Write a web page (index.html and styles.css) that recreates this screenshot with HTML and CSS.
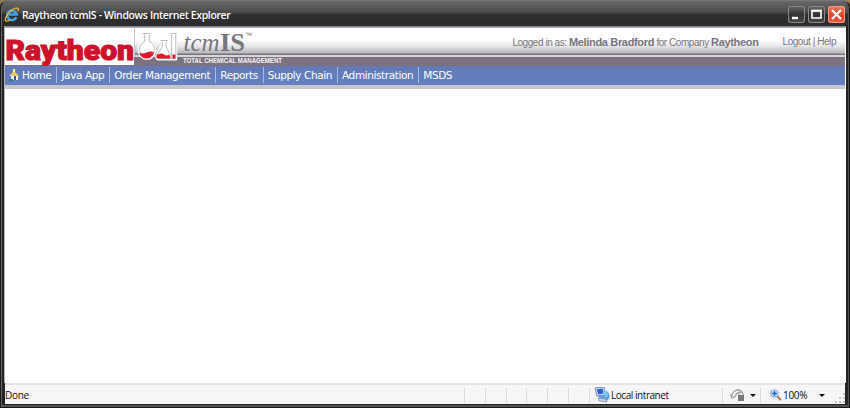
FILE: index.html
```html
<!DOCTYPE html>
<html lang="en">
<head>
<meta charset="utf-8">
<title>Raytheon tcmIS</title>
<link rel="stylesheet" href="styles.css">
</head>
<body>
<div class="window">
  <header class="titlebar">
    <svg class="ie" width="16" height="16" viewBox="0 0 16 16" fill="none">
      <path d="M12.3 10.2A4.7 4.7 0 1 1 12.6 7.5H5" stroke="#3aa4ee" stroke-width="2.6"/>
      <path d="M2 14C-.5 12 5 3 12 1.2c3-.5 2.6 1.5 1.6 3M2 14c1.5.7 3-.3 4-1" stroke="#f0b437" stroke-width="1.3"/>
    </svg>
    <span class="caption">Raytheon tcmIS - Windows Internet Explorer</span>
    <div class="controls">
      <span class="ctl"><svg width="17" height="17"><path d="M4 12h6" stroke="#fff" stroke-width="2.4"/></svg></span>
      <span class="ctl"><svg width="17" height="17"><path d="M4 5h9v7H4z" fill="none" stroke="#fff" stroke-width="1.6"/><path d="M3.2 4.6h10.6" stroke="#fff" stroke-width="2"/></svg></span>
      <span class="ctl close"><svg width="17" height="17"><path d="M4 4l9 9M13 4l-9 9" stroke="#fff" stroke-width="2.2"/></svg></span>
    </div>
  </header>
  <main class="page">
    <div class="banner">
      <svg class="logo" width="290" height="39" viewBox="0 0 290 39">
        <path d="M0 1h129v37H0z" fill="#fff"/>
        <path d="M129.500 1v28" stroke="#c8c8cc"/>
        <text class="raytheon" x=".5" y="33" textLength="128.500" lengthAdjust="spacingAndGlyphs">Raytheon</text>
        <g stroke-linejoin="round" transform="translate(7.6 .5) scale(.93 1)">
          <path d="M141 6v8a9 9 0 1 0 7 0V6zM160 13v5l-5 9q-2 5 2 5h13q4 0 2-5l-5-9v-5zM170 6v26h6V6z" fill="#fff" stroke="#fff" stroke-width="2"/>
          <path d="M140 6h8M142 7v7a8 8 0 1 0 5 0V7M159 13h8M161 14v5l-6 9q-1 3 2 3h11q4 0 2-3l-5-9v-5M169.500 6h7M171 7v24h4.500V7" fill="none" stroke="#a7a5ab" stroke-width=".8"/>
          <path d="M136 25q4 2 8 0t8 0q-2 6-8 6-6 0-8-6zM156 27q4-2 7 0 3 2 5 0l2 3-1 1h-13q-2-1-1-4zM172 27h3v4h-3z" fill="#dc1a2c"/>
        </g>
        <text class="tcm" x="178.500" y="24" textLength="36" lengthAdjust="spacingAndGlyphs">tcm</text>
        <text class="is" x="215" y="24" textLength="25" lengthAdjust="spacingAndGlyphs">IS</text>
        <text class="tm" x="240" y="11" textLength="7" lengthAdjust="spacingAndGlyphs">™</text>
        <text class="tagline" x="178" y="35.500" textLength="99" lengthAdjust="spacingAndGlyphs">TOTAL CHEMICAL MANAGEMENT</text>
      </svg>
      <div class="account">
        <span class="user">Logged in as: <b>Melinda Bradford</b> for Company <b>Raytheon</b></span>
        <span class="links">Logout | Help</span>
      </div>
    </div>
    <nav class="menu">
      <svg class="home" width="11" height="12" viewBox="0 0 11 12"><path d="M2 6h7v5H2z" fill="#f5f4dc"/><path d="M0 7l5-5 5 5z" fill="#f1cb50"/><path d="M4 0h2v3H4z" fill="#fff09a"/><path d="M5 7h2v4H5z" fill="#245c9c"/><path d="M0 10h4v2H0z" fill="#2f7c86"/></svg>
      <span class="item">Home</span><span class="item">Java App</span><span class="item">Order Management</span><span class="item">Reports</span><span class="item">Supply Chain</span><span class="item">Administration</span><span class="item">MSDS</span>
    </nav>
    <div class="content"></div>
  </main>
  <footer class="status">
    <span class="done">Done</span>
    <div class="cells"><i></i><i></i><i></i><i></i><i></i><i></i></div>
    <div class="zone">
      <svg width="16" height="16" viewBox="0 0 16 16"><circle cx="10" cy="9" r="5.500" fill="#5ba2dc"/><path d="M1 1l9-1 1 8-8 1z" fill="#dce5f2" stroke="#7288b5"/><path d="M2.500 2.500l6-1 1 5-5 1z" fill="#2660cb"/><path d="M9 3l4 1 1 5-3 2z" fill="#7fc6f3"/><path d="M4 11l8 1 1 3-8-1z" fill="#c9cfe0" stroke="#7582a5" stroke-width=".6"/></svg>
      <span class="zonetext">Local intranet</span>
    </div>
    <div class="privacy">
      <svg width="16" height="14" viewBox="0 0 16 14"><path d="M2 8C3 2 8 0 12 4M0 6l2 4 4-2M5 9q1-4 4-5" fill="none" stroke="#aaa" stroke-width="1.500"/><path d="M8 7h6v6H8z" fill="#777"/><path d="M9 7V5q2-2 4 0v2M11 9v2" fill="none" stroke="#888"/></svg>
      <span class="arrow"></span>
    </div>
    <div class="zoom">
      <svg width="12" height="12" viewBox="0 0 12 12"><path d="M7 7l4 4" stroke="#b87955" stroke-width="2"/><circle cx="4.500" cy="4.500" r="3.800" fill="#d9efff" stroke="#7e9dca"/><path d="M2 4.500h5M4.500 2v5" stroke="#1765cc" stroke-width="1.600"/></svg>
      <span class="percent">100%</span><span class="arrow"></span>
    </div>
    <svg class="grip" width="10" height="10" fill="#c4c4c4"><path d="M8 0h2v2H8zM4 4h2v2H4zM8 4h2v2H8zM0 8h2v2H0zM4 8h2v2H4zM8 8h2v2H8z"/></svg>
  </footer>
</div>
</body>
</html>
```
FILE: styles.css
```css
* { box-sizing: border-box; }
body { margin: 0; background: #9a7958; overflow: hidden; }
.window { width: 850px; height: 408px; display: flex; flex-direction: column; padding: 0 4px 3px; background: #242424; border: 1px solid #171717; border-top-color: #777; border-radius: 7px 7px 0 0; box-shadow: inset 1px 0 #666, inset -1px 0 #555, inset 0 -2px #505050; }
.titlebar { height: 25px; display: flex; align-items: center; margin: 0 -3px; padding: 2px 3px 0 2px; background: linear-gradient(#686868, #4b4b4b 45%, #303030 55%, #2b2b2b); border-radius: 6px 6px 0 0; }
.caption { margin-left: 2px; color: #fff; font: 600 10.500px "Open Sans", sans-serif; letter-spacing: -.37px; white-space: nowrap; }
.controls { margin-left: auto; display: flex; gap: 3px; }
.ctl { width: 17px; height: 17px; border-radius: 3px; background: linear-gradient(#666, #343434 50%, #484848); box-shadow: inset 0 0 0 1px #888; }
.ctl svg { display: block; }
.close { background: linear-gradient(#f17a5d, #df4025 60%, #ed6346); box-shadow: inset 0 0 0 1px #f09b86; }
.page { flex: 1; min-height: 0; display: flex; flex-direction: column; background: #fff; border-left: 1px solid #b5b3b5; border-top: 1px solid #8b8691; margin-left: -1px; margin-right: -1px; padding-right: 1px; }
.banner { height: 39px; display: flex; justify-content: space-between; background: linear-gradient(#aaa6af 0 1px, #fff 1px 13px, #e6e6e8 19px, #b9b8bc 26px, #77747b 27px 28px, #d7d7d8 28px 29.500px, #7d7380 30px 38px, #71708a 39px); }
.logo { display: block; overflow: visible; }
.raytheon { font: 900 28px Roboto, sans-serif; fill: #ce112b; stroke: #ce112b; stroke-width: 1.1px; }
.tcm { font: italic 25px "Liberation Serif", serif; fill: #77757c; }
.is { font: bold 25px "Liberation Serif", serif; fill: #77757c; }
.tm { font: 8px "Liberation Sans", sans-serif; fill: #77757c; }
.tagline { font: bold 6.500px "Liberation Sans", sans-serif; fill: #f5f3f6; }
.account { display: flex; gap: 24px; padding: 8px 9px 0 0; color: #77757f; font: 10px/14px "Liberation Sans", sans-serif; letter-spacing: -.45px; white-space: nowrap; }
.user b { font-size: 11px; letter-spacing: -.33px; }
.menu { height: 19px; display: flex; background: linear-gradient(#6479b5, #6281c4); color: #fff; font: 10.500px/16px "DejaVu Sans", sans-serif; letter-spacing: -.4px; padding: 0 0 1px 4px; }
.home { margin: 3px 2px 0 0; }
.item { padding: 0 5px 0 4px; height: 16px; margin-top: 1px; border-left: 1px solid #a9bbe2; white-space: nowrap; }
.item:first-of-type { border: 0; padding-left: 0; }
.content { flex: 1; border-top: 4px solid #c8c6c8; }
.status { height: 21px; display: flex; align-items: center; background: #f6f6f6; border-top: 2px solid #e4e4e4; color: #111; font: 10px "Open Sans", sans-serif; letter-spacing: -.3px; white-space: nowrap; padding-top: 1px; }
.done { width: 459px; }
.cells { display: flex; width: 125px; }
.cells i { width: 20.900px; height: 15px; border-left: 1px solid #d8d8d8; }
.zone { width: 133px; height: 15px; display: flex; align-items: center; gap: 1px; border-left: 1px solid #d8d8d8; padding-left: 4px; }
.zonetext { letter-spacing: -.45px; }
.privacy { width: 38px; height: 15px; display: flex; align-items: center; gap: 4px; border-left: 1px solid #d8d8d8; padding-left: 7px; }
.arrow { border: 3px solid transparent; border-top-color: #111; border-bottom: 0; }
.zoom { width: 75px; height: 15px; display: flex; align-items: center; gap: 1px; border-left: 1px solid #d8d8d8; padding-left: 9px; }
.zoom .arrow { margin-left: 11px; }
.grip { flex: none; margin-top: 6px; }
```
